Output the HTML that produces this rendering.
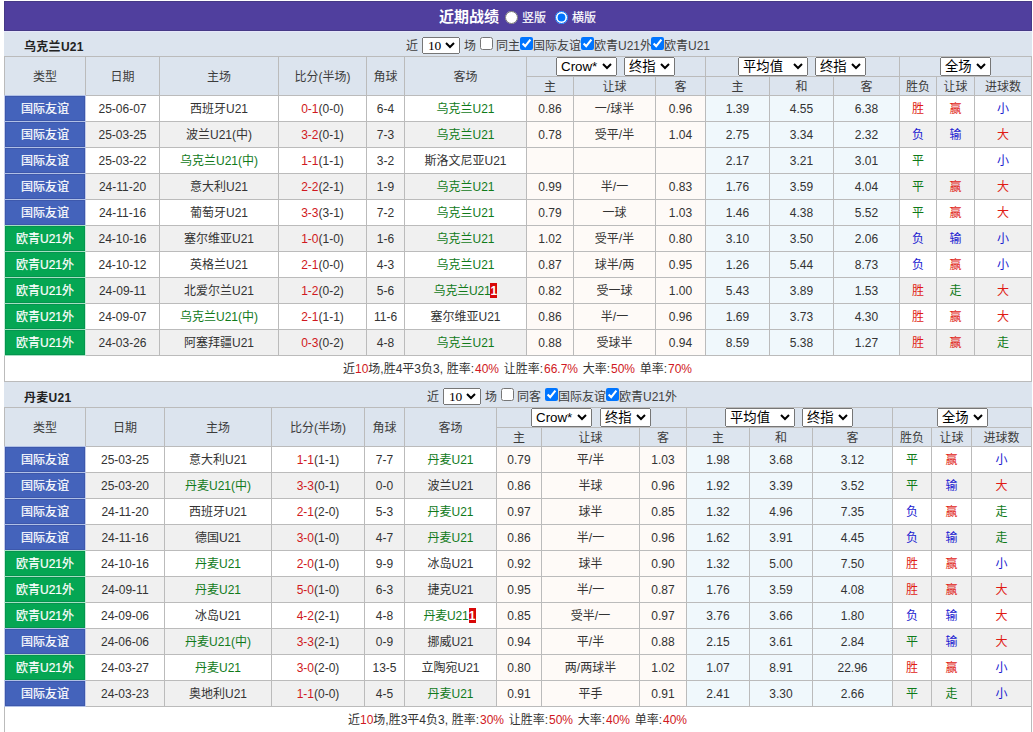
<!DOCTYPE html>
<html lang="zh-CN">
<head>
<meta charset="utf-8">
<title>近期战绩</title>
<style>
html,body{margin:0;padding:0;background:#fff;}
body{font-family:"Liberation Sans","Noto Sans CJK SC",sans-serif;font-size:12px;color:#333;width:1033px;height:732px;overflow:hidden;position:relative;}
#wrap{position:absolute;left:4px;top:1px;width:1028px;}
.ab{position:absolute;white-space:nowrap;margin:0;}
.bar{height:30px;box-sizing:border-box;background:#503F9E;border:1px solid #463A86;color:#fff;line-height:30px;position:relative;}
.bar .bt{font-size:15px;font-weight:bold;}
.bar .rl{font-size:12px;}
.rd{width:13px;height:13px;}
.team{height:25px;box-sizing:border-box;border-top:1px solid #E6E6FA;background:#DCE4EE;position:relative;line-height:26px;color:#404040;}
#tm2{height:25px;border-top:0;}
.team .tn{font-weight:bold;font-size:12px;color:#222;letter-spacing:0.3px;}
.cb{width:13px;height:13px;}
.sw{display:block;height:19px;top:0;}
.sw select{display:block;position:absolute;left:0;top:0;width:100%;height:100%;margin:0;box-sizing:border-box;font-family:"Liberation Sans","Noto Sans CJK SC",sans-serif;font-size:13.333px;line-height:normal;-webkit-appearance:none;appearance:none;border:1px solid #767676;border-radius:0;background:#fff;color:#000;padding:0 0 0 4px;text-align:left;clip-path:polygon(1px 0,calc(100% - 1px) 0,calc(100% - 1px) 1px,100% 1px,100% calc(100% - 1px),calc(100% - 1px) calc(100% - 1px),calc(100% - 1px) 100%,1px 100%,1px calc(100% - 1px),0 calc(100% - 1px),0 1px,1px 1px);}
.sw svg{position:absolute;right:4px;top:50%;margin-top:-3.5px;width:12px;height:8px;overflow:visible;pointer-events:none;}
.sn{width:38px;height:17px;}
.sn select{font-family:"Liberation Serif","Noto Serif CJK SC",serif;font-size:13.5px;padding:0 0 0 5px;letter-spacing:-0.3px;}
table.grid{border-collapse:separate;border-spacing:0;table-layout:fixed;width:1028px;border-left:1px solid #bbb;border-top:1px solid #bbb;}
table.grid th,table.grid td{border-right:1px solid #bbb;border-bottom:1px solid #bbb;padding:0;text-align:center;font-weight:normal;font-size:12px;overflow:hidden;white-space:nowrap;box-sizing:border-box;}
table.grid th{background:#DCE4EE;color:#3c3c3c;}
tr.h1{height:20px;}
tr.h2{height:19px;}
tr.h1 th{height:20px;line-height:19px;}
tr.h1 th[rowspan]{height:39px;line-height:30px;padding:5px 0 3px;}
tr.h2 th{height:19px;line-height:16px;padding:2px 0 0;}
th.sel{position:relative;}
th.sel div{height:19px;position:relative;}
tbody tr{height:26px;}
tbody td{height:26px;line-height:20px;padding:5px 0 0;}
tr.odd td{background:#fff;}
tr.even td{background:#F0F0F0;}
tbody tr td.o{background:#FEFAF7;}
tbody tr td.a{background:#F0F8FC;}
tbody tr td.tb{background:#4463BB;color:#fff;position:relative;overflow:visible;}
tbody tr td.tg{background:#05A653;color:#fff;position:relative;overflow:visible;}
td.tb::before,td.tg::before{content:"";position:absolute;left:-1px;top:-1px;right:-1px;bottom:-1px;border:1px solid #C4CCEA;border-top-color:#B0C0E6;border-bottom-color:#B0C0E6;box-shadow:inset 0 0 0 1px rgba(0,0,40,0.10);pointer-events:none;}
td.tg::before{border-color:#A6DEC2 #C8ECD9;}
.sc{color:#D01820;}
.gr{color:#107A1A;}
.red{color:#D01822;}
td.r{color:#E01B14;}
td.u{color:#1A1AD0;}
td.n{color:#0F7A18;}
.rc{display:inline-block;background:#D80808;color:#fff;font-size:12px;font-weight:bold;line-height:17px;height:15px;width:7px;overflow:hidden;vertical-align:top;margin:2px 0 0 0;text-align:center;letter-spacing:0;}
.wc{letter-spacing:-0.2px;}
tr.sum td{background:#fff;color:#333;word-spacing:0.4px;}
.pct{margin:0 1px 0 0.9px;}
.cw{position:relative;}
#t2 .cw{left:-1px;}
td.tb,td.tg,.bar .rl{-webkit-text-stroke:0.2px #fff;}

</style>
</head>
<body>
<div id="wrap">
<div class="bar"><span class="ab bt" style="left:434px;top:0px">近期战绩</span><input type="radio" name="v" class="ab rd" style="left:500px;top:9px"><span class="ab rl" style="left:517px;top:1px">竖版</span><input type="radio" name="v" class="ab rd" style="left:550px;top:9px" checked><span class="ab rl" style="left:567px;top:1px">横版</span></div>
<div class="team" id="tm1"><span class="ab tn" style="left:20px;top:2px">乌克兰U21</span><span class="ab " style="left:402px;top:1px">近</span><span class="ab sw sn" style="left:418px;top:5px"><select><option>10</option></select><svg viewBox="0 0 12 8" aria-hidden="true"><path d="M2 1L6 5L10 1" fill="none" stroke="#000" stroke-width="2"/></svg></span><span class="ab " style="left:460px;top:1px">场</span><input type="checkbox" class="ab cb" style="left:476px;top:5px"><span class="ab " style="left:492px;top:1px">同主</span><input type="checkbox" class="ab cb" style="left:516px;top:5px" checked><span class="ab " style="left:529px;top:1px">国际友谊</span><input type="checkbox" class="ab cb" style="left:577px;top:5px" checked><span class="ab " style="left:590px;top:1px">欧青U21外</span><input type="checkbox" class="ab cb" style="left:647px;top:5px" checked><span class="ab " style="left:660px;top:1px">欧青U21</span></div>
<table class="grid" id="t1"><colgroup><col style="width:81px"><col style="width:74px"><col style="width:119px"><col style="width:88px"><col style="width:38px"><col style="width:122px"><col style="width:47px"><col style="width:82px"><col style="width:50px"><col style="width:64px"><col style="width:64px"><col style="width:66px"><col style="width:37px"><col style="width:38px"><col style="width:57px"></colgroup>
<thead><tr class="h1"><th rowspan="2">类型</th><th rowspan="2">日期</th><th rowspan="2">主场</th><th rowspan="2">比分(半场)</th><th rowspan="2">角球</th><th rowspan="2">客场</th><th colspan="3" class="sel"><div><span class="ab sw" style="left:29px;width:61px"><select><option>Crow*</option></select><svg viewBox="0 0 12 8" aria-hidden="true"><path d="M2 1L6 5L10 1" fill="none" stroke="#000" stroke-width="2"/></svg></span><span class="ab sw" style="left:97px;width:51px"><select><option>终指</option></select><svg viewBox="0 0 12 8" aria-hidden="true"><path d="M2 1L6 5L10 1" fill="none" stroke="#000" stroke-width="2"/></svg></span></div></th><th colspan="3" class="sel"><div><span class="ab sw" style="left:32px;width:70px"><select><option>平均值</option></select><svg viewBox="0 0 12 8" aria-hidden="true"><path d="M2 1L6 5L10 1" fill="none" stroke="#000" stroke-width="2"/></svg></span><span class="ab sw" style="left:109px;width:51px"><select><option>终指</option></select><svg viewBox="0 0 12 8" aria-hidden="true"><path d="M2 1L6 5L10 1" fill="none" stroke="#000" stroke-width="2"/></svg></span></div></th><th colspan="3" class="sel"><div><span class="ab sw" style="left:40px;width:51px"><select><option>全场</option></select><svg viewBox="0 0 12 8" aria-hidden="true"><path d="M2 1L6 5L10 1" fill="none" stroke="#000" stroke-width="2"/></svg></span></div></th></tr>
<tr class="h2"><th>主</th><th>让球</th><th>客</th><th>主</th><th>和</th><th>客</th><th>胜负</th><th>让球</th><th>进球数</th></tr></thead><tbody>
<tr class="odd"><td class="tb">国际友谊</td><td>25-06-07</td><td>西班牙U21</td><td><span class="sc">0-1</span>(0-0)</td><td>6-4</td><td><span class="gr">乌克兰U21</span></td><td class="o">0.86</td><td class="o">一/球半</td><td class="o">0.96</td><td class="a">1.39</td><td class="a">4.55</td><td class="a">6.38</td><td class="r">胜</td><td class="r">赢</td><td class="u">小</td></tr>
<tr class="even"><td class="tb">国际友谊</td><td>25-03-25</td><td>波兰U21(中)</td><td><span class="sc">3-2</span>(0-1)</td><td>7-3</td><td><span class="gr">乌克兰U21</span></td><td class="o">0.78</td><td class="o">受平/半</td><td class="o">1.04</td><td class="a">2.75</td><td class="a">3.34</td><td class="a">2.32</td><td class="u">负</td><td class="u">输</td><td class="r">大</td></tr>
<tr class="odd"><td class="tb">国际友谊</td><td>25-03-22</td><td><span class="gr">乌克兰U21(中)</span></td><td><span class="sc">1-1</span>(1-1)</td><td>3-2</td><td>斯洛文尼亚U21</td><td class="o"></td><td class="o"></td><td class="o"></td><td class="a">2.17</td><td class="a">3.21</td><td class="a">3.01</td><td class="n">平</td><td class=""></td><td class="u">小</td></tr>
<tr class="even"><td class="tb">国际友谊</td><td>24-11-20</td><td>意大利U21</td><td><span class="sc">2-2</span>(2-1)</td><td>1-9</td><td><span class="gr">乌克兰U21</span></td><td class="o">0.99</td><td class="o">半/一</td><td class="o">0.83</td><td class="a">1.76</td><td class="a">3.59</td><td class="a">4.04</td><td class="n">平</td><td class="r">赢</td><td class="r">大</td></tr>
<tr class="odd"><td class="tb">国际友谊</td><td>24-11-16</td><td>葡萄牙U21</td><td><span class="sc">3-3</span>(3-1)</td><td>7-2</td><td><span class="gr">乌克兰U21</span></td><td class="o">0.79</td><td class="o">一球</td><td class="o">1.03</td><td class="a">1.46</td><td class="a">4.38</td><td class="a">5.52</td><td class="n">平</td><td class="r">赢</td><td class="r">大</td></tr>
<tr class="even"><td class="tg">欧青U21外</td><td>24-10-16</td><td>塞尔维亚U21</td><td><span class="sc">1-0</span>(1-0)</td><td>1-6</td><td><span class="gr">乌克兰U21</span></td><td class="o">1.02</td><td class="o">受平/半</td><td class="o">0.80</td><td class="a">3.10</td><td class="a">3.50</td><td class="a">2.06</td><td class="u">负</td><td class="u">输</td><td class="u">小</td></tr>
<tr class="odd"><td class="tg">欧青U21外</td><td>24-10-12</td><td>英格兰U21</td><td><span class="sc">2-1</span>(0-0)</td><td>4-3</td><td><span class="gr">乌克兰U21</span></td><td class="o">0.87</td><td class="o">球半/两</td><td class="o">0.95</td><td class="a">1.26</td><td class="a">5.44</td><td class="a">8.73</td><td class="u">负</td><td class="r">赢</td><td class="u">小</td></tr>
<tr class="even"><td class="tg">欧青U21外</td><td>24-09-11</td><td>北爱尔兰U21</td><td><span class="sc">1-2</span>(0-2)</td><td>5-6</td><td><span class="cw"><span class="gr wc">乌克兰U21</span><span class="rc">1</span></span></td><td class="o">0.82</td><td class="o">受一球</td><td class="o">1.00</td><td class="a">5.43</td><td class="a">3.89</td><td class="a">1.53</td><td class="r">胜</td><td class="n">走</td><td class="r">大</td></tr>
<tr class="odd"><td class="tg">欧青U21外</td><td>24-09-07</td><td><span class="gr">乌克兰U21(中)</span></td><td><span class="sc">2-1</span>(1-1)</td><td>11-6</td><td>塞尔维亚U21</td><td class="o">0.86</td><td class="o">半/一</td><td class="o">0.96</td><td class="a">1.69</td><td class="a">3.73</td><td class="a">4.30</td><td class="r">胜</td><td class="r">赢</td><td class="r">大</td></tr>
<tr class="even"><td class="tg">欧青U21外</td><td>24-03-26</td><td>阿塞拜疆U21</td><td><span class="sc">0-3</span>(0-2)</td><td>4-8</td><td><span class="gr">乌克兰U21</span></td><td class="o">0.88</td><td class="o">受球半</td><td class="o">0.94</td><td class="a">8.59</td><td class="a">5.38</td><td class="a">1.27</td><td class="r">胜</td><td class="r">赢</td><td class="n">走</td></tr>
<tr class="sum"><td colspan="15">近<span class="red">10</span>场,胜4平3负3, 胜率:<span class="red pct">40%</span> 让胜率:<span class="red pct">66.7%</span> 大率:<span class="red pct">50%</span> 单率:<span class="red pct">70%</span></td></tr>
</tbody></table>
<div class="team" id="tm2"><span class="ab tn" style="left:20px;top:3px">丹麦U21</span><span class="ab " style="left:423px;top:2px">近</span><span class="ab sw sn" style="left:439px;top:6px"><select><option>10</option></select><svg viewBox="0 0 12 8" aria-hidden="true"><path d="M2 1L6 5L10 1" fill="none" stroke="#000" stroke-width="2"/></svg></span><span class="ab " style="left:481px;top:2px">场</span><input type="checkbox" class="ab cb" style="left:497px;top:6px"><span class="ab " style="left:513px;top:2px">同客</span><input type="checkbox" class="ab cb" style="left:541px;top:6px" checked><span class="ab " style="left:554px;top:2px">国际友谊</span><input type="checkbox" class="ab cb" style="left:602px;top:6px" checked><span class="ab " style="left:615px;top:2px">欧青U21外</span></div>
<table class="grid" id="t2"><colgroup><col style="width:81px"><col style="width:79px"><col style="width:107px"><col style="width:93px"><col style="width:40px"><col style="width:92px"><col style="width:45px"><col style="width:98px"><col style="width:47px"><col style="width:63px"><col style="width:63px"><col style="width:80px"><col style="width:39px"><col style="width:40px"><col style="width:60px"></colgroup>
<thead><tr class="h1"><th rowspan="2">类型</th><th rowspan="2">日期</th><th rowspan="2">主场</th><th rowspan="2">比分(半场)</th><th rowspan="2">角球</th><th rowspan="2">客场</th><th colspan="3" class="sel"><div><span class="ab sw" style="left:34px;width:61px"><select><option>Crow*</option></select><svg viewBox="0 0 12 8" aria-hidden="true"><path d="M2 1L6 5L10 1" fill="none" stroke="#000" stroke-width="2"/></svg></span><span class="ab sw" style="left:103px;width:51px"><select><option>终指</option></select><svg viewBox="0 0 12 8" aria-hidden="true"><path d="M2 1L6 5L10 1" fill="none" stroke="#000" stroke-width="2"/></svg></span></div></th><th colspan="3" class="sel"><div><span class="ab sw" style="left:38px;width:70px"><select><option>平均值</option></select><svg viewBox="0 0 12 8" aria-hidden="true"><path d="M2 1L6 5L10 1" fill="none" stroke="#000" stroke-width="2"/></svg></span><span class="ab sw" style="left:115px;width:51px"><select><option>终指</option></select><svg viewBox="0 0 12 8" aria-hidden="true"><path d="M2 1L6 5L10 1" fill="none" stroke="#000" stroke-width="2"/></svg></span></div></th><th colspan="3" class="sel"><div><span class="ab sw" style="left:44px;width:51px"><select><option>全场</option></select><svg viewBox="0 0 12 8" aria-hidden="true"><path d="M2 1L6 5L10 1" fill="none" stroke="#000" stroke-width="2"/></svg></span></div></th></tr>
<tr class="h2"><th>主</th><th>让球</th><th>客</th><th>主</th><th>和</th><th>客</th><th>胜负</th><th>让球</th><th>进球数</th></tr></thead><tbody>
<tr class="odd"><td class="tb">国际友谊</td><td>25-03-25</td><td>意大利U21</td><td><span class="sc">1-1</span>(1-1)</td><td>7-7</td><td><span class="gr">丹麦U21</span></td><td class="o">0.79</td><td class="o">平/半</td><td class="o">1.03</td><td class="a">1.98</td><td class="a">3.68</td><td class="a">3.12</td><td class="n">平</td><td class="r">赢</td><td class="u">小</td></tr>
<tr class="even"><td class="tb">国际友谊</td><td>25-03-20</td><td><span class="gr">丹麦U21(中)</span></td><td><span class="sc">3-3</span>(0-1)</td><td>0-0</td><td>波兰U21</td><td class="o">0.86</td><td class="o">半球</td><td class="o">0.96</td><td class="a">1.92</td><td class="a">3.39</td><td class="a">3.52</td><td class="n">平</td><td class="u">输</td><td class="r">大</td></tr>
<tr class="odd"><td class="tb">国际友谊</td><td>24-11-20</td><td>西班牙U21</td><td><span class="sc">2-1</span>(2-0)</td><td>5-3</td><td><span class="gr">丹麦U21</span></td><td class="o">0.97</td><td class="o">球半</td><td class="o">0.85</td><td class="a">1.32</td><td class="a">4.96</td><td class="a">7.35</td><td class="u">负</td><td class="r">赢</td><td class="n">走</td></tr>
<tr class="even"><td class="tb">国际友谊</td><td>24-11-16</td><td>德国U21</td><td><span class="sc">3-0</span>(1-0)</td><td>4-7</td><td><span class="gr">丹麦U21</span></td><td class="o">0.86</td><td class="o">半/一</td><td class="o">0.96</td><td class="a">1.62</td><td class="a">3.91</td><td class="a">4.45</td><td class="u">负</td><td class="u">输</td><td class="n">走</td></tr>
<tr class="odd"><td class="tg">欧青U21外</td><td>24-10-16</td><td><span class="gr">丹麦U21</span></td><td><span class="sc">2-0</span>(1-0)</td><td>9-9</td><td>冰岛U21</td><td class="o">0.92</td><td class="o">球半</td><td class="o">0.90</td><td class="a">1.32</td><td class="a">5.00</td><td class="a">7.50</td><td class="r">胜</td><td class="r">赢</td><td class="u">小</td></tr>
<tr class="even"><td class="tg">欧青U21外</td><td>24-09-11</td><td><span class="gr">丹麦U21</span></td><td><span class="sc">5-0</span>(1-0)</td><td>6-3</td><td>捷克U21</td><td class="o">0.95</td><td class="o">半/一</td><td class="o">0.87</td><td class="a">1.76</td><td class="a">3.59</td><td class="a">4.08</td><td class="r">胜</td><td class="r">赢</td><td class="r">大</td></tr>
<tr class="odd"><td class="tg">欧青U21外</td><td>24-09-06</td><td>冰岛U21</td><td><span class="sc">4-2</span>(2-1)</td><td>4-8</td><td><span class="cw"><span class="gr wc">丹麦U21</span><span class="rc">1</span></span></td><td class="o">0.85</td><td class="o">受半/一</td><td class="o">0.97</td><td class="a">3.76</td><td class="a">3.66</td><td class="a">1.80</td><td class="u">负</td><td class="u">输</td><td class="r">大</td></tr>
<tr class="even"><td class="tb">国际友谊</td><td>24-06-06</td><td><span class="gr">丹麦U21(中)</span></td><td><span class="sc">3-3</span>(2-1)</td><td>0-9</td><td>挪威U21</td><td class="o">0.94</td><td class="o">平/半</td><td class="o">0.88</td><td class="a">2.15</td><td class="a">3.61</td><td class="a">2.84</td><td class="n">平</td><td class="u">输</td><td class="r">大</td></tr>
<tr class="odd"><td class="tg">欧青U21外</td><td>24-03-27</td><td><span class="gr">丹麦U21</span></td><td><span class="sc">3-0</span>(2-0)</td><td>13-5</td><td>立陶宛U21</td><td class="o">0.80</td><td class="o">两/两球半</td><td class="o">1.02</td><td class="a">1.07</td><td class="a">8.91</td><td class="a">22.96</td><td class="r">胜</td><td class="r">赢</td><td class="u">小</td></tr>
<tr class="even"><td class="tb">国际友谊</td><td>24-03-23</td><td>奥地利U21</td><td><span class="sc">1-1</span>(0-0)</td><td>4-5</td><td><span class="gr">丹麦U21</span></td><td class="o">0.91</td><td class="o">平手</td><td class="o">0.91</td><td class="a">2.41</td><td class="a">3.30</td><td class="a">2.66</td><td class="n">平</td><td class="n">走</td><td class="u">小</td></tr>
<tr class="sum"><td colspan="15">近<span class="red">10</span>场,胜3平4负3, 胜率:<span class="red pct">30%</span> 让胜率:<span class="red pct">50%</span> 大率:<span class="red pct">40%</span> 单率:<span class="red pct">40%</span></td></tr>
</tbody></table>
</div>
</body>
</html>
